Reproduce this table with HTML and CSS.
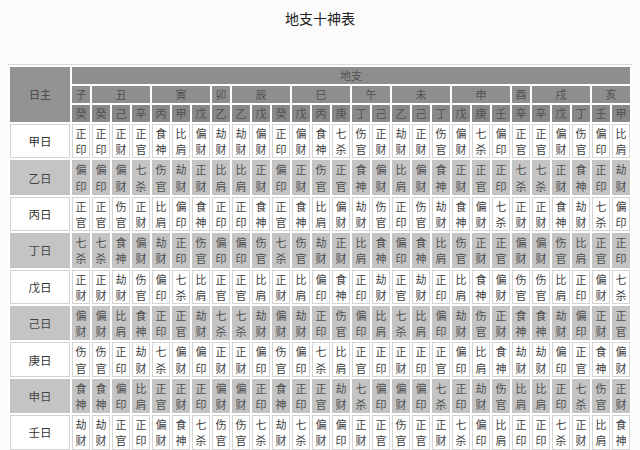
FILE: index.html
```html
<!DOCTYPE html>
<html lang="zh-CN">
<head>
<meta charset="utf-8">
<title>地支十神表</title>
<link rel="stylesheet" href="styles.css">
</head>
<body>
<div class="title">地支十神表</div>
<table class="tbl">
<colgroup><col class="c0"><col class="c"><col class="c"><col class="c"><col class="c"><col class="c"><col class="c"><col class="c"><col class="c"><col class="c"><col class="c"><col class="c"><col class="c"><col class="c"><col class="c"><col class="c"><col class="c"><col class="c"><col class="c"><col class="c"><col class="c"><col class="c"><col class="c"><col class="c"><col class="c"><col class="c"><col class="c"><col class="c"><col class="c"></colgroup>
<thead>
<tr class="h"><th class="rz" rowspan="3">日主</th><th colspan="28">地支</th></tr>
<tr class="h"><th>子</th><th colspan="3">丑</th><th colspan="3">寅</th><th>卯</th><th colspan="3">辰</th><th colspan="3">巳</th><th colspan="2">午</th><th colspan="3">未</th><th colspan="3">申</th><th>酉</th><th colspan="3">戌</th><th colspan="2">亥</th></tr>
<tr class="h s"><th>癸</th><th>癸</th><th>己</th><th>辛</th><th>丙</th><th>甲</th><th>戊</th><th>乙</th><th>乙</th><th>戊</th><th>癸</th><th>戊</th><th>丙</th><th>庚</th><th>丁</th><th>己</th><th>乙</th><th>己</th><th>丁</th><th>戊</th><th>庚</th><th>壬</th><th>辛</th><th>辛</th><th>戊</th><th>丁</th><th>壬</th><th>甲</th></tr>
</thead>
<tbody>
<tr class="w"><td class="day">甲日</td><td>正印</td><td>正印</td><td>正财</td><td>正官</td><td>食神</td><td>比肩</td><td>偏财</td><td>劫财</td><td>劫财</td><td>偏财</td><td>正印</td><td>偏财</td><td>食神</td><td>七杀</td><td>伤官</td><td>正财</td><td>劫财</td><td>正财</td><td>伤官</td><td>偏财</td><td>七杀</td><td>偏印</td><td>正官</td><td>正官</td><td>偏财</td><td>伤官</td><td>偏印</td><td>比肩</td></tr>
<tr class="g"><td class="day">乙日</td><td>偏印</td><td>偏印</td><td>偏财</td><td>七杀</td><td>伤官</td><td>劫财</td><td>正财</td><td>比肩</td><td>比肩</td><td>正财</td><td>偏印</td><td>正财</td><td>伤官</td><td>正官</td><td>食神</td><td>偏财</td><td>比肩</td><td>偏财</td><td>食神</td><td>正财</td><td>正官</td><td>正印</td><td>七杀</td><td>七杀</td><td>正财</td><td>食神</td><td>正印</td><td>劫财</td></tr>
<tr class="w"><td class="day">丙日</td><td>正官</td><td>正官</td><td>伤官</td><td>正财</td><td>比肩</td><td>偏印</td><td>食神</td><td>正印</td><td>正印</td><td>食神</td><td>正官</td><td>食神</td><td>比肩</td><td>偏财</td><td>劫财</td><td>伤官</td><td>正印</td><td>伤官</td><td>劫财</td><td>食神</td><td>偏财</td><td>七杀</td><td>正财</td><td>正财</td><td>食神</td><td>劫财</td><td>七杀</td><td>偏印</td></tr>
<tr class="g"><td class="day">丁日</td><td>七杀</td><td>七杀</td><td>食神</td><td>偏财</td><td>劫财</td><td>正印</td><td>伤官</td><td>偏印</td><td>偏印</td><td>伤官</td><td>七杀</td><td>伤官</td><td>劫财</td><td>正财</td><td>比肩</td><td>食神</td><td>偏印</td><td>食神</td><td>比肩</td><td>伤官</td><td>正财</td><td>正官</td><td>偏财</td><td>偏财</td><td>伤官</td><td>比肩</td><td>正官</td><td>正印</td></tr>
<tr class="w"><td class="day">戊日</td><td>正财</td><td>正财</td><td>劫财</td><td>伤官</td><td>偏印</td><td>七杀</td><td>比肩</td><td>正官</td><td>正官</td><td>比肩</td><td>正财</td><td>比肩</td><td>偏印</td><td>食神</td><td>正印</td><td>劫财</td><td>正官</td><td>劫财</td><td>正印</td><td>比肩</td><td>食神</td><td>偏财</td><td>伤官</td><td>伤官</td><td>比肩</td><td>正印</td><td>偏财</td><td>七杀</td></tr>
<tr class="g"><td class="day">己日</td><td>偏财</td><td>偏财</td><td>比肩</td><td>食神</td><td>正印</td><td>正官</td><td>劫财</td><td>七杀</td><td>七杀</td><td>劫财</td><td>偏财</td><td>劫财</td><td>正印</td><td>伤官</td><td>偏印</td><td>比肩</td><td>七杀</td><td>比肩</td><td>偏印</td><td>劫财</td><td>伤官</td><td>正财</td><td>食神</td><td>食神</td><td>劫财</td><td>偏印</td><td>正财</td><td>正官</td></tr>
<tr class="w"><td class="day">庚日</td><td>伤官</td><td>伤官</td><td>正印</td><td>劫财</td><td>七杀</td><td>偏财</td><td>偏印</td><td>正财</td><td>正财</td><td>偏印</td><td>伤官</td><td>偏印</td><td>七杀</td><td>比肩</td><td>正官</td><td>正印</td><td>正财</td><td>正印</td><td>正官</td><td>偏印</td><td>比肩</td><td>食神</td><td>劫财</td><td>劫财</td><td>偏印</td><td>正官</td><td>食神</td><td>偏财</td></tr>
<tr class="g"><td class="day">申日</td><td>食神</td><td>食神</td><td>偏印</td><td>比肩</td><td>正官</td><td>正财</td><td>正印</td><td>偏财</td><td>偏财</td><td>正印</td><td>食神</td><td>正印</td><td>正官</td><td>劫财</td><td>七杀</td><td>偏印</td><td>偏财</td><td>偏印</td><td>七杀</td><td>正印</td><td>劫财</td><td>伤官</td><td>比肩</td><td>比肩</td><td>正印</td><td>七杀</td><td>伤官</td><td>正财</td></tr>
<tr class="w"><td class="day">壬日</td><td>劫财</td><td>劫财</td><td>正官</td><td>正印</td><td>偏财</td><td>食神</td><td>七杀</td><td>伤官</td><td>伤官</td><td>七杀</td><td>劫财</td><td>七杀</td><td>偏财</td><td>偏印</td><td>正财</td><td>正官</td><td>伤官</td><td>正官</td><td>正财</td><td>七杀</td><td>偏印</td><td>比肩</td><td>正印</td><td>正印</td><td>七杀</td><td>正财</td><td>比肩</td><td>食神</td></tr>
</tbody>
</table>
</body>
</html>
```
FILE: styles.css
```css
body {
  margin: 8px;
  background: #fbfbfb;
  font-family: "Noto Sans CJK SC", "Noto Sans", sans-serif;
}
.title {
  width: 624px;
  height: 20px;
  line-height: 20px;
  margin: 0 0 37px 0;
  text-align: center;
  font-size: 14px;
  color: #222;
}
.tbl {
  border-collapse: separate;
  border-spacing: 2px;
  table-layout: fixed;
  width: 624px;
  background: #fff;
  box-shadow: 0 0 0 1px #d8d8d8;
}
.c0 {
  width: 60px;
}
.c {
  width: 18px;
}
.h th {
  background: #8e8e8e;
  color: #505050;
  font-weight: normal;
  font-size: 11px;
  height: 17px;
  line-height: 17px;
  padding: 0;
  border: 0;
  text-align: center;
}
.h .rz {
  background: #939393;
  color: #444;
  font-size: 11px;
}
.s th {
  background: #888;
}
tbody td {
  padding: 0;
  border: 1px solid #d4d4d4;
  text-align: center;
  font-size: 11px;
  line-height: 16.2px;
  height: 32.4px;
  color: #3e3e3e;
  background: #fff;
}
tbody .day {
  font-size: 11.5px;
  color: #333;
}
.g td {
  background: #c4c4c4;
  border-color: #c4c4c4;
  color: #4e4e4e;
}
.g .day {
  color: #444;
}
```
